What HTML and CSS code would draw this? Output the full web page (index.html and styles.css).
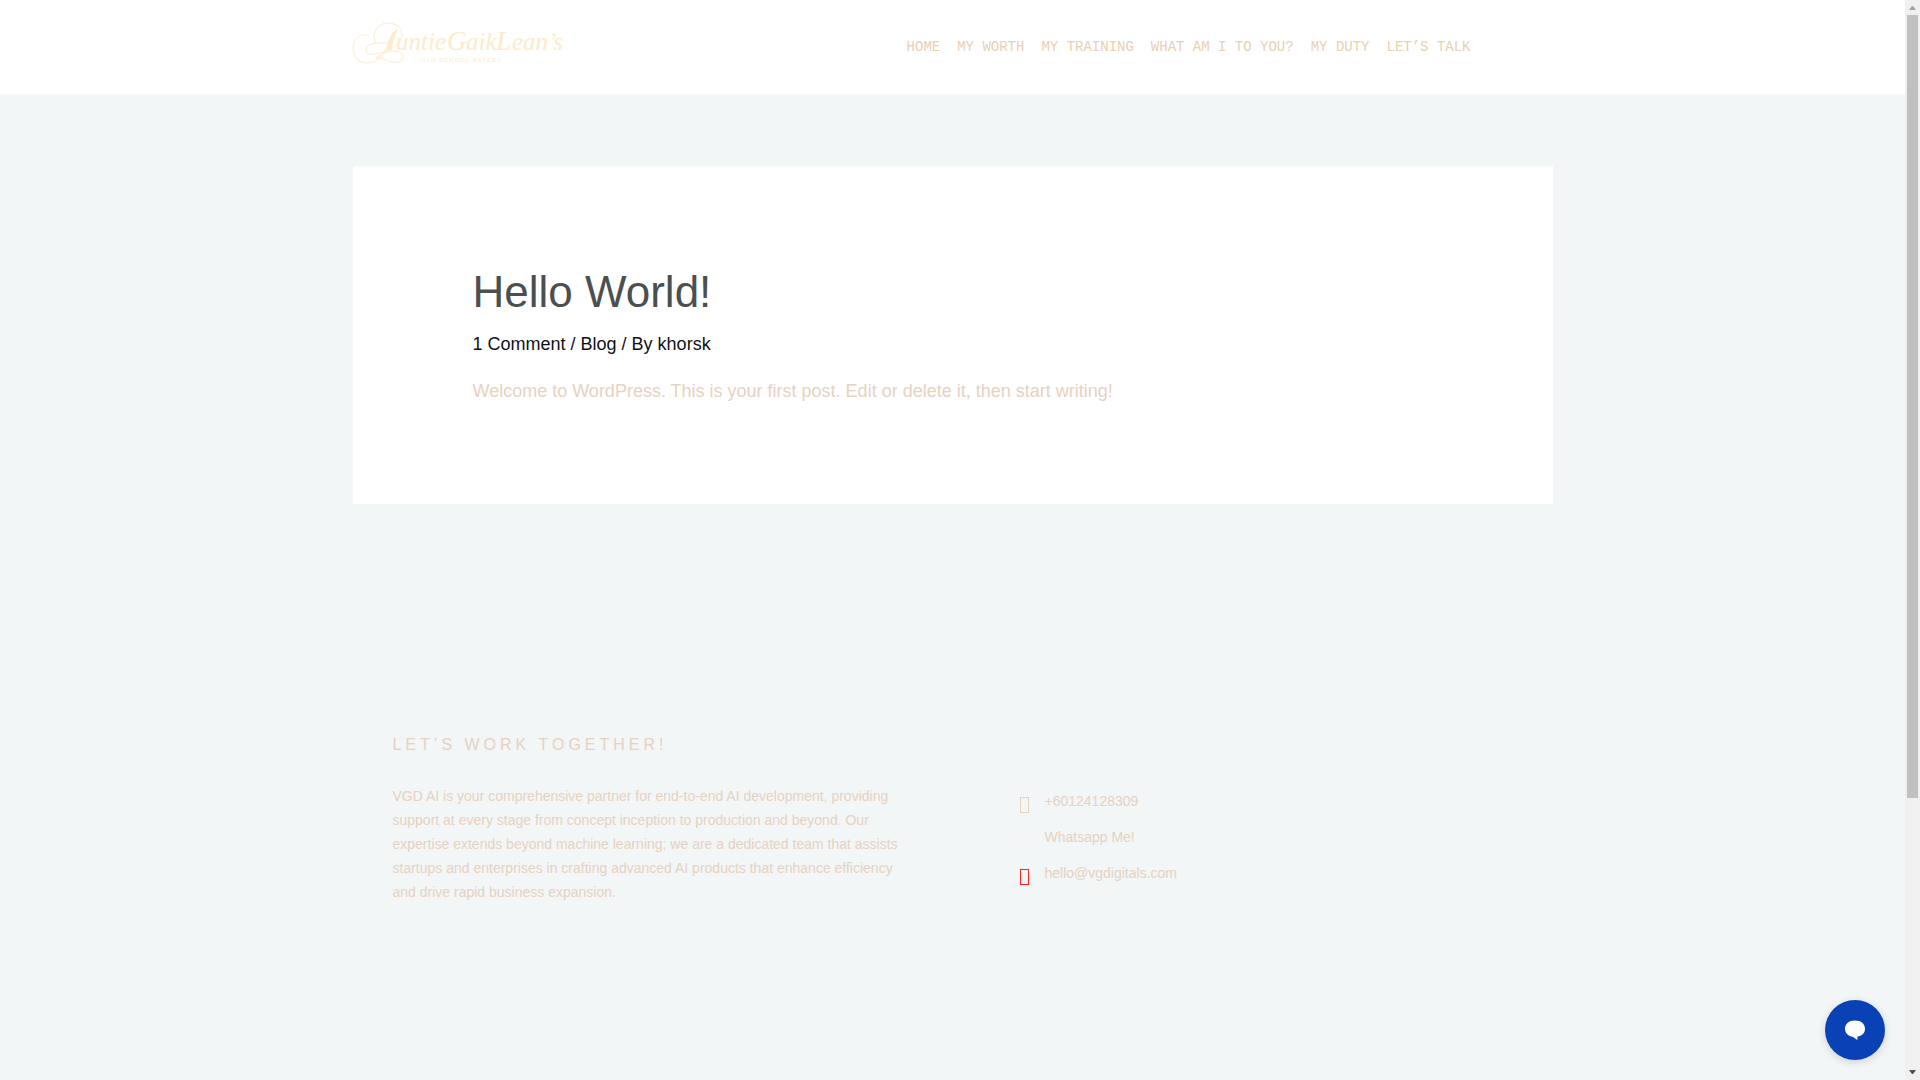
FILE: index.html
```html
<!DOCTYPE html>
<html lang="en">
<head>
<meta charset="utf-8">
<meta name="viewport" content="width=device-width, initial-scale=1">
<title>Hello World! – AuntieGaikLean's</title>
<link rel="stylesheet" href="styles.css">
</head>
<body>
<div class="page">
  <header class="site-header">
    <div class="container header-row">
      <a class="logo" href="#" aria-label="AuntieGaikLean's Old School Eatery">
        <svg width="214" height="50" viewBox="0 0 214 50">
          <g fill="none" stroke="#fdebcb" stroke-width="1">
            <path d="M16 20C8 16 0 23 0 32c0 9 6 15 14 15 12 0 18-9 28-32"/>
            <path d="M23 28C18 18 24 7 35 7c8 0 14 5 14 11 0 9-10 16-21 19-9 2-15 2-15-3 0-6 10-9 25-6"/>
            <path d="M23 42c6-4 11-7 18-7 6 0 9 3 9 6 0 4-5 6-10 5-6-1-10-5-17-4"/>
          </g>
          <path d="M44 13C38 18 35 25 34 33l4 1c1-7 3-14 6-21z" fill="#fdebcb" stroke="#fdebcb"/>
          <g class="logo-name">
            <text x="43" y="34" font-size="25">untie</text>
            <text x="94" y="34" font-size="27">G</text>
            <text x="113" y="34" font-size="25">aik</text>
            <text x="143" y="34" font-size="27">L</text>
            <text x="159" y="34" font-size="25">ean’s</text>
          </g>
          <text class="logo-tag" x="68" y="46">OLD SCHOOL EATERY</text>
        </svg>
      </a>
      <nav class="nav">
        <a href="#">HOME</a>
        <a href="#">MY WORTH</a>
        <a href="#">MY TRAINING</a>
        <a href="#">WHAT AM I TO YOU?</a>
        <a href="#">MY DUTY</a>
        <a href="#">LET’S TALK</a>
      </nav>
    </div>
  </header>

  <main class="container">
    <article class="post">
      <h1>Hello World!</h1>
      <p class="meta"><a href="#">1 Comment</a> / <a href="#">Blog</a> / By <a href="#">khorsk</a></p>
      <p class="content">Welcome to WordPress. This is your first post. Edit or delete it, then start writing!</p>
    </article>
  </main>

  <footer class="container footer">
    <section class="about">
      <h2>LET’S WORK TOGETHER!</h2>
      <p>VGD AI is your comprehensive partner for end-to-end AI development, providing support at every stage from concept inception to production and beyond. Our expertise extends beyond machine learning; we are a dedicated team that assists startups and enterprises in crafting advanced AI products that enhance efficiency and drive rapid business expansion.</p>
    </section>
    <ul class="contacts">
      <li><span class="glyph"></span><a href="#">+60124128309</a></li>
      <li><span class="glyph glyph-pale">6</span><a href="#">Whatsapp Me!</a></li>
      <li><span class="glyph glyph-red"></span><a href="#">hello@vgdigitals.com</a></li>
    </ul>
  </footer>
</div>

<div class="scrollbar" aria-hidden="true">
  <svg width="15" height="15" viewBox="0 0 15 15"><path d="M4 10 7 6h1l3 4z" fill="#a3a3a3"/></svg>
  <div class="track"><div class="thumb"></div></div>
  <svg width="15" height="15" viewBox="0 0 15 15"><path d="M4 5h7L8 9H7z" fill="#505050"/></svg>
</div>

<button class="chat" type="button" aria-label="Open chat">
  <svg width="20" height="20" viewBox="0 0 20 20"><path d="M10 .5C4 .5 0 4 0 8.800c0 4.500 3.500 7.500 8 8.200l4.400 3v-3.200C17 16 20 13 20 8.800 20 4 16 .5 10 .5z" fill="#fff"/></svg>
</button>
</body>
</html>
```
FILE: styles.css
```css
* {
  box-sizing: border-box;
  margin: 0;
  padding: 0;
}

body {
  display: grid;
  grid-template-columns: 1fr 15px;
  height: 100vh;
  overflow: hidden;
  background: #f2f6f7;
  color: #e7d1c0;
  font-family: "Liberation Sans", Arial, sans-serif;
}

a {
  color: inherit;
  text-decoration: none;
}

.page {
  overflow: hidden;
}

.container {
  width: 100%;
  max-width: 1200px;
  margin: 0 auto;
}

/* Header */
.site-header {
  background: #fff;
}

.header-row {
  display: flex;
  justify-content: space-between;
  align-items: flex-start;
  padding: 16px 82px 28px 0;
}

.logo svg {
  display: block;
  overflow: visible;
}

.logo-name {
  fill: #fdebcb;
  font-family: "Liberation Serif", "Times New Roman", serif;
  font-style: italic;
}

.logo-tag {
  fill: #fdebcb;
  font-size: 6px;
  letter-spacing: 1px;
}

.nav {
  display: flex;
  gap: 17px;
  padding-top: 21px;
  color: #e8d0b3;
  font: 14px/20px "Liberation Mono", "Courier New", monospace;
}

/* Post */
.post {
  margin-top: 72px;
  padding: 96px 120px 97px;
  background: #fff;
}

h1 {
  color: #4b4f50;
  font-size: 44px;
  font-weight: 400;
  line-height: 60px;
}

.meta {
  margin: 6px 0 15px;
  color: #111118;
  font-size: 18px;
  line-height: 32px;
}

.content {
  font-size: 18px;
  line-height: 32px;
}

/* Footer */
.footer {
  display: grid;
  grid-template-columns: 522px 1fr;
  column-gap: 104px;
  padding: 228px 40px 0;
}

h2 {
  margin-bottom: 26px;
  font-size: 16px;
  font-weight: 400;
  letter-spacing: 4px;
  line-height: 26px;
}

.about p {
  font-size: 14px;
  line-height: 24px;
}

.contacts {
  display: grid;
  align-content: start;
  row-gap: 12px;
  padding-top: 57px;
  list-style: none;
  font-size: 14px;
  line-height: 24px;
}

.contacts li {
  display: flex;
  gap: 17px;
}

.glyph {
  width: 9px;
  height: 24px;
  padding-top: 4px;
  font-size: 18px;
}

.glyph:empty::before {
  content: "";
  display: block;
  width: 7px;
  height: 14px;
  margin: 4px 1px;
  border: 1px solid currentColor;
}

.glyph-pale {
  color: #f6f6f9;
}

.glyph-red {
  color: #ff2020;
}

/* Window scrollbar */
.scrollbar {
  display: flex;
  flex-direction: column;
  background: #f0f0f0;
}

.scrollbar svg {
  flex: none;
}

.track {
  flex: 1;
  padding: 0 2px;
}

.thumb {
  height: 74.6%;
  background: #c0c0c0;
}

/* Chat launcher */
.chat {
  position: fixed;
  right: 35px;
  bottom: 20px;
  display: grid;
  place-items: center;
  width: 60px;
  height: 60px;
  border: 0;
  border-radius: 50%;
  background: #0a42b5;
  box-shadow: 0 2px 8px rgba(0, 0, 0, 0.15);
}
```
